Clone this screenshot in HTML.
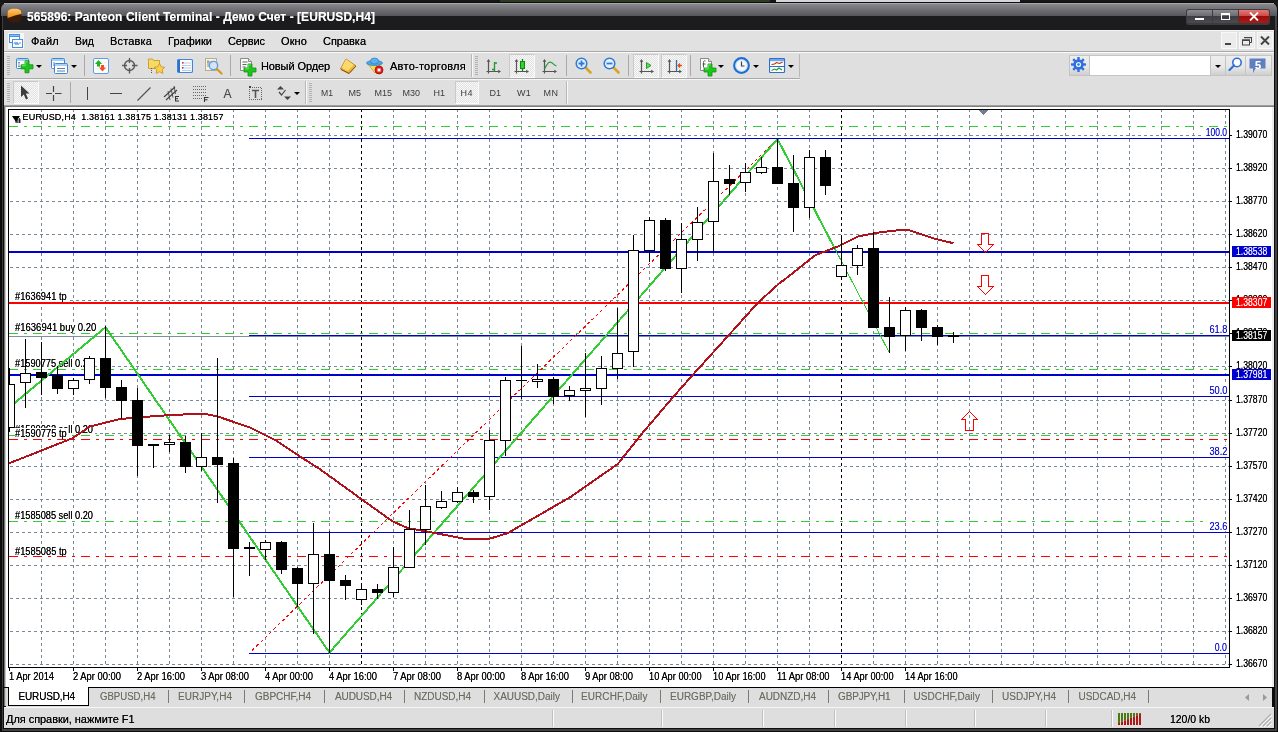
<!DOCTYPE html>
<html><head><meta charset="utf-8"><title>Terminal</title>
<style>
html,body{margin:0;padding:0;}
body{width:1278px;height:732px;overflow:hidden;background:#1b1b1d;font-family:"Liberation Sans",sans-serif;position:relative;}
.t{position:absolute;white-space:nowrap;line-height:12px;font-family:"Liberation Sans",sans-serif;text-shadow:0 0 0 rgba(0,0,0,.85);}
.abs{position:absolute;}
/*CSS*/
</style></head><body><div id="w" style="position:absolute;left:0;top:0;width:1278px;height:732px;will-change:transform">
<div class="abs" style="left:0px;top:0px;width:1278px;height:2px;background:#161616;"></div>
<div class="abs" style="left:500px;top:0px;width:270px;height:2px;background:#2f3a24;"></div>
<div class="abs" style="left:776px;top:0px;width:244px;height:2px;background:#d4d8d8;"></div>
<div class="abs" style="left:0px;top:2px;width:1278px;height:730px;background:#0c0c0c;border-radius:7px 7px 0 0;"></div>
<div class="abs" style="left:2px;top:16px;width:1px;height:714px;background:#3e3e40;"></div>
<div class="abs" style="left:1275px;top:16px;width:2px;height:714px;background:#434345;"></div>
<div class="abs" style="left:2px;top:729px;width:1275px;height:2px;background:#404042;"></div>
<div class="abs" style="left:3px;top:16px;width:1272px;height:15px;background:#1c1c1e;"></div>
<div class="abs" style="left:1px;top:3px;width:1276px;height:13px;background:linear-gradient(#8c8c90,#55555a);border-radius:6px 6px 0 0;"></div>
<div class="abs" style="left:4px;top:3px;width:1270px;height:1px;background:#a9a9ad;"></div>
<svg class="abs" style="left:6px;top:7px;" width="17" height="17" viewBox="0 0 17 17"><defs><linearGradient id="og" x1="0" y1="0" x2="0" y2="1"><stop offset="0" stop-color="#ffc870"/><stop offset="1" stop-color="#f08a10"/></linearGradient></defs><path d="M1.5 12V6c0-3 2-4.5 7-4.5s7 1.500 7 4.500v6c0 2-2.500 3.500-7 3.500s-7-1.500-7-3.500z" fill="#3a1c08"/><path d="M1.500 11V6c0-3 2-4.500 7-4.500s7 1.500 7 4.500v1c-5 1-10 2.500-14 4z" fill="url(#og)"/></svg>
<div class="t" style="top:11px;font-size:12px;line-height:12px;color:#fff;text-shadow:0 0 0 rgba(255,255,255,.5);left:27px;font-weight:700;letter-spacing:0.053px;">565896: Panteon Client Terminal - Демо Счет - [EURUSD,H4]</div>
<div class="abs" style="left:1186px;top:9px;width:84px;height:16px;background:#3c3c40;border-radius:3px;"></div>
<div class="abs" style="left:1187px;top:10px;width:25px;height:13px;background:linear-gradient(#8d8d91 0,#6c6c70 45%,#3e3e42 50%,#4c4c50 100%);border-radius:2px 0 0 2px;"></div>
<div class="abs" style="left:1213px;top:10px;width:25px;height:13px;background:linear-gradient(#8d8d91 0,#6c6c70 45%,#3e3e42 50%,#4c4c50 100%);"></div>
<div class="abs" style="left:1239px;top:10px;width:30px;height:13px;background:linear-gradient(#e27a78 0,#cf4a48 45%,#9c0c0a 50%,#a81c18 100%);border-radius:0 2px 2px 0;"></div>
<div class="abs" style="left:1195px;top:18px;width:9px;height:2px;background:#fff;"></div>
<div class="abs" style="left:1221px;top:13px;width:9px;height:7px;background:transparent;border:1px solid #fff;border-top-width:2px;box-sizing:border-box;"></div>
<svg class="abs" style="left:1249px;top:12px;" width="10" height="9" viewBox="0 0 10 9"><path d="M1 0.500L9 8.500M9 0.500L1 8.500" stroke="#fff" stroke-width="1.800"/></svg>
<div class="abs" style="left:4px;top:30px;width:1270px;height:1px;background:#f4f4f4;"></div>
<div class="abs" style="left:4px;top:31px;width:1270px;height:20px;background:#e1e1e1;"></div>
<div class="abs" style="left:4px;top:51px;width:1270px;height:1px;background:#a8a8a8;"></div>
<div class="abs" style="left:4px;top:52px;width:1270px;height:1px;background:#fbfbfb;"></div>
<div class="abs" style="left:4px;top:53px;width:1270px;height:53px;background:#dfdfdf;"></div>
<div class="abs" style="left:4px;top:106px;width:1270px;height:1px;background:#7f7f78;"></div>
<div class="abs" style="left:4px;top:107px;width:1270px;height:2px;background:#fff;"></div>
<div class="abs" style="left:4px;top:78px;width:796px;height:1px;background:#a8a8a8;"></div>
<div class="abs" style="left:4px;top:79px;width:796px;height:1px;background:#f6f6f6;"></div>
<div class="abs" style="left:4px;top:105px;width:1270px;height:1px;background:#a0a0a0;"></div>
<div class="abs" style="left:8px;top:33px;width:16px;height:16px;background:#f6f6f6;"></div>
<svg class="abs" style="left:8px;top:33px;" width="16" height="16" viewBox="0 0 16 16"><rect x="1.500" y="1.500" width="10" height="8" fill="#fff" stroke="#4a8ee0"/><rect x="1.500" y="1.500" width="10" height="2" fill="#8fc0f5" stroke="#4a8ee0"/><rect x="4.500" y="6.500" width="10" height="8" fill="#fff" stroke="#4a8ee0"/><path d="M6 11l1-2 1 3 1-3 1 3 1-2 2 0" stroke="#4a8ee0" fill="none" stroke-width=".8"/></svg>
<div class="t" style="top:36px;font-size:11px;line-height:11px;color:#000;left:31px;letter-spacing:0.238px;">Файл</div>
<div class="t" style="top:36px;font-size:11px;line-height:11px;color:#000;left:75px;transform:scale(0.9545,1);transform-origin:left top;">Вид</div>
<div class="t" style="top:36px;font-size:11px;line-height:11px;color:#000;left:110px;letter-spacing:0.158px;">Вставка</div>
<div class="t" style="top:36px;font-size:11px;line-height:11px;color:#000;left:168px;letter-spacing:0.038px;">Графики</div>
<div class="t" style="top:36px;font-size:11px;line-height:11px;color:#000;left:228px;letter-spacing:-0.112px;">Сервис</div>
<div class="t" style="top:36px;font-size:11px;line-height:11px;color:#000;left:281px;letter-spacing:0.109px;">Окно</div>
<div class="t" style="top:36px;font-size:11px;line-height:11px;color:#000;left:323px;letter-spacing:-0.022px;">Справка</div>
<div class="abs" style="left:1221px;top:32px;width:16px;height:17px;background:#ececec;border:1px solid #f8f8f8;box-sizing:border-box;"></div>
<div class="abs" style="left:1239px;top:32px;width:16px;height:17px;background:#ececec;border:1px solid #f8f8f8;box-sizing:border-box;"></div>
<div class="abs" style="left:1257px;top:32px;width:16px;height:17px;background:#ececec;border:1px solid #f8f8f8;box-sizing:border-box;"></div>
<div class="abs" style="left:1225px;top:43px;width:6px;height:2px;background:#444;"></div>
<svg class="abs" style="left:1240px;top:34px;" width="14" height="13" viewBox="0 0 14 13"><path d="M4.500 3.500h7v5h-2" fill="none" stroke="#444" stroke-width="1"/><rect x="2.500" y="6" width="7" height="5" fill="none" stroke="#444"/><rect x="2" y="5.500" width="8" height="1.500" fill="#444"/><rect x="4" y="3" width="8" height="1.200" fill="#444"/></svg>
<svg class="abs" style="left:1260px;top:36px;" width="10" height="9" viewBox="0 0 10 9"><path d="M1 0.500L9 8.500M9 0.500L1 8.500" stroke="#444" stroke-width="2"/></svg>
<div class="abs" style="left:7px;top:56px;width:3px;height:1px;background:#b2b2b2;"></div>
<div class="abs" style="left:7px;top:58px;width:3px;height:1px;background:#b2b2b2;"></div>
<div class="abs" style="left:7px;top:60px;width:3px;height:1px;background:#b2b2b2;"></div>
<div class="abs" style="left:7px;top:62px;width:3px;height:1px;background:#b2b2b2;"></div>
<div class="abs" style="left:7px;top:64px;width:3px;height:1px;background:#b2b2b2;"></div>
<div class="abs" style="left:7px;top:66px;width:3px;height:1px;background:#b2b2b2;"></div>
<div class="abs" style="left:7px;top:68px;width:3px;height:1px;background:#b2b2b2;"></div>
<div class="abs" style="left:7px;top:70px;width:3px;height:1px;background:#b2b2b2;"></div>
<div class="abs" style="left:7px;top:72px;width:3px;height:1px;background:#b2b2b2;"></div>
<div class="abs" style="left:7px;top:74px;width:3px;height:1px;background:#b2b2b2;"></div>
<svg class="abs" style="left:16px;top:57px;" width="18" height="18" viewBox="0 0 18 18"><rect x="0.500" y="1.500" width="12" height="10" rx="1" fill="#fff" stroke="#3f86d9"/><rect x="1" y="2" width="11" height="2" fill="#a9d0f7"/><path d="M3 5v5M2 6l1-1 1 1M2 9l1 1 1-1" stroke="#5a7fa8" fill="none" stroke-width=".8"/><path d="M5 7.8h4v-4h4v4h4v4h-4v4h-4v-4h-4z" fill="#1fc51f" stroke="#0c8f0c" stroke-width=".8"/><path d="M5.9 8.7h3.300v-4h2.500" fill="none" stroke="#7be87b" stroke-width=".9"/></svg>
<svg class="abs" style="left:36px;top:65px;" width="6" height="3" viewBox="0 0 6 3"><path d="M0 0h6l-3 3z" fill="#000"/></svg>
<svg class="abs" style="left:51px;top:57px;" width="18" height="18" viewBox="0 0 18 18"><rect x="0.500" y="1.500" width="13" height="10" rx="1" fill="#fff" stroke="#3f86d9"/><rect x="1" y="2" width="12" height="2" fill="#a9d0f7"/><path d="M3 5v4M5 7.500h7" stroke="#5a7fa8" fill="none"/><rect x="3.500" y="6.500" width="13" height="10" rx="1" fill="#fff" stroke="#3f86d9"/><rect x="4" y="7" width="12" height="2" fill="#a9d0f7"/><path d="M6 11.500h8M6 14h8" stroke="#5a7fa8"/></svg>
<svg class="abs" style="left:71px;top:65px;" width="6" height="3" viewBox="0 0 6 3"><path d="M0 0h6l-3 3z" fill="#000"/></svg>
<div class="abs" style="left:84px;top:55px;width:1px;height:21px;background:#a9a9a9;"></div>
<svg class="abs" style="left:93px;top:58px;" width="16" height="16" viewBox="0 0 16 16"><rect x="0.500" y="0.500" width="15" height="15" rx="1.500" fill="#fff" stroke="#5b9ee6"/><path d="M2 5h12M2 8h12M2 11h12" stroke="#ddd" stroke-width=".6"/><path d="M5.500 2L2 6h2v2.500h3V6h2z" fill="#1eb41e"/><path d="M9.500 13.500L6 9.500h2V7h3v2.500h2z" fill="#f0502a"/></svg>
<svg class="abs" style="left:122px;top:58px;" width="16" height="16" viewBox="0 0 16 16"><circle cx="7.500" cy="7.500" r="5" fill="none" stroke="#595959" stroke-width="1.400"/><path d="M7.500 0v5M7.500 10v5.500M0 7.500h5M10 7.500h5.500" stroke="#595959" stroke-width="1.400"/></svg>
<svg class="abs" style="left:148px;top:57px;" width="18" height="18" viewBox="0 0 18 18"><path d="M0.500 4.500v-2.500h4l1 1.500h6v8h-11z" fill="#f7d969" stroke="#c9a227"/><path d="M3.500 11v5" stroke="#555" stroke-dasharray="1 1"/><path d="M11.500 6.500l1.700 3.300 3.600.5-2.600 2.500.7 3.700-3.400-1.800-3.300 1.800.6-3.700-2.600-2.500 3.600-.5z" fill="#f9d24a" stroke="#c8921e" stroke-width=".8"/></svg>
<svg class="abs" style="left:177px;top:58px;" width="16" height="16" viewBox="0 0 16 16"><rect x="0.500" y="1.500" width="15" height="13" rx="1.500" fill="#fff" stroke="#3f86d9" stroke-width="1.200"/><rect x="1" y="2" width="2" height="12" fill="#2e6fc9"/><path d="M5 5h9M5 7.500h9M5 10h9M5 12.500h9" stroke="#9cc2ee" stroke-width=".8"/><rect x="5" y="4" width="1.500" height="1.500" fill="#d22"/><rect x="5" y="9" width="1.500" height="1.500" fill="#d22"/></svg>
<svg class="abs" style="left:205px;top:57px;" width="18" height="18" viewBox="0 0 18 18"><rect x="0.500" y="1.500" width="11" height="12" fill="#f4f1e6" stroke="#b9ae8c"/><path d="M3 3v7M6 4v5M2 5h3M5 6h3" stroke="#777" stroke-width=".8"/><circle cx="8.500" cy="8.500" r="4.200" fill="#cfe4fb" fill-opacity=".85" stroke="#5b9ee6" stroke-width="1.300"/><path d="M12 12l4.500 4.500" stroke="#d69a1e" stroke-width="2.200" stroke-linecap="round"/></svg>
<div class="abs" style="left:230px;top:55px;width:1px;height:21px;background:#a9a9a9;"></div>
<svg class="abs" style="left:240px;top:57px;" width="17" height="20" viewBox="0 0 17 20"><path d="M0.500 1.500h8l3 3v9h-11z" fill="#fbfbfb" stroke="#8a8a8a"/><path d="M8.500 1.500v3h3" fill="#ddd" stroke="#8a8a8a"/><path d="M2.500 5h5M2.500 7.500h4M2.500 10h3" stroke="#666"/><path d="M4 11h4v-4h4v4h4v4h-4v4h-4v-4h-4z" fill="#1fc51f" stroke="#0c8f0c" stroke-width=".8"/><path d="M4.9 11.9h3.300v-4h2.500" fill="none" stroke="#7be87b" stroke-width=".9"/></svg>
<div class="t" style="top:61px;font-size:11px;line-height:11px;color:#000;left:261px;letter-spacing:-0.099px;">Новый Ордер</div>
<svg class="abs" style="left:340px;top:58px;" width="17" height="16" viewBox="0 0 17 16"><path d="M6 1l10 7-7 7.500-8.500-4.500z" fill="#eab53a" stroke="#b67812"/><path d="M6 1l8 6-6.500 6-6-3.500z" fill="#fbd96a"/><path d="M1 11.500l8 4 7-7.500" fill="none" stroke="#8a5a10" stroke-width="1"/></svg>
<svg class="abs" style="left:366px;top:57px;" width="18" height="18" viewBox="0 0 18 18"><path d="M2 7l7 9 6-9z" fill="#f7dc5a" stroke="#caa21e" stroke-width=".8"/><ellipse cx="8.500" cy="6" rx="8" ry="2.600" fill="#4da3e6" stroke="#2b7dc4" stroke-width=".7"/><ellipse cx="8.500" cy="4" rx="4" ry="3" fill="#5fb1ee" stroke="#2b7dc4" stroke-width=".7"/><circle cx="13" cy="13" r="4" fill="#d8201c" stroke="#a00" stroke-width=".7"/><rect x="11.500" y="11.500" width="3" height="3" fill="#fff"/></svg>
<div class="t" style="top:61px;font-size:11px;line-height:11px;color:#000;left:390px;letter-spacing:0.258px;">Авто-торговля</div>
<div class="abs" style="left:471px;top:54px;width:1px;height:23px;background:#b8b8b8;"></div>
<div class="abs" style="left:472px;top:54px;width:1px;height:23px;background:#f8f8f8;"></div>
<div class="abs" style="left:475px;top:56px;width:3px;height:1px;background:#b2b2b2;"></div>
<div class="abs" style="left:475px;top:58px;width:3px;height:1px;background:#b2b2b2;"></div>
<div class="abs" style="left:475px;top:60px;width:3px;height:1px;background:#b2b2b2;"></div>
<div class="abs" style="left:475px;top:62px;width:3px;height:1px;background:#b2b2b2;"></div>
<div class="abs" style="left:475px;top:64px;width:3px;height:1px;background:#b2b2b2;"></div>
<div class="abs" style="left:475px;top:66px;width:3px;height:1px;background:#b2b2b2;"></div>
<div class="abs" style="left:475px;top:68px;width:3px;height:1px;background:#b2b2b2;"></div>
<div class="abs" style="left:475px;top:70px;width:3px;height:1px;background:#b2b2b2;"></div>
<div class="abs" style="left:475px;top:72px;width:3px;height:1px;background:#b2b2b2;"></div>
<div class="abs" style="left:475px;top:74px;width:3px;height:1px;background:#b2b2b2;"></div>
<svg class="abs" style="left:486px;top:59px;" width="16" height="16" viewBox="0 0 16 16"><path d="M2.500 1v13.500M0.500 12.500h13" stroke="#555" stroke-width="1.200" fill="none"/><path d="M2.500 0l-1.800 2.800h3.600zM15 12.500l-2.800-1.800v3.600z" fill="#555"/><path d="M8.500 3v9M8.500 4h2.500M6 10.500h2.500" stroke="#1f9a2f" stroke-width="1.300" fill="none"/></svg>
<div class="abs" style="left:509px;top:54px;width:26px;height:24px;background:#ececec;border:1px solid #c9c9c9;border-right-color:#fafafa;border-bottom-color:#fafafa;box-sizing:border-box;background-image:repeating-conic-gradient(#e2e2e2 0 25%,#f8f8f8 0 50%);background-size:2px 2px;"></div>
<svg class="abs" style="left:514px;top:59px;" width="16" height="16" viewBox="0 0 16 16"><path d="M2.500 1v13.500M0.500 12.500h13" stroke="#555" stroke-width="1.200" fill="none"/><path d="M2.500 0l-1.800 2.800h3.600zM15 12.500l-2.800-1.800v3.600z" fill="#555"/><path d="M8.500 0v12" stroke="#0a7a0a" stroke-width="1.200"/><rect x="6.500" y="2.500" width="4" height="7" fill="#2fd32f" stroke="#0a8a0a"/></svg>
<svg class="abs" style="left:542px;top:59px;" width="16" height="16" viewBox="0 0 16 16"><path d="M2.500 1v13.500M0.500 12.500h13" stroke="#555" stroke-width="1.200" fill="none"/><path d="M2.500 0l-1.800 2.800h3.600zM15 12.500l-2.800-1.800v3.600z" fill="#555"/><path d="M2.500 10c3-6 5-8 7-6.500s3 3 5 3.500" stroke="#2f9a3f" stroke-width="1.200" fill="none"/></svg>
<div class="abs" style="left:566px;top:55px;width:1px;height:21px;background:#a9a9a9;"></div>
<svg class="abs" style="left:575px;top:57px;" width="17" height="17" viewBox="0 0 17 17"><path d="M10.500 10.500l5 5" stroke="#d9a41e" stroke-width="2.600" stroke-linecap="round"/><circle cx="6.500" cy="6.500" r="5.300" fill="#e6f1fd" stroke="#2f7bd4" stroke-width="1.500"/><path d="M3.500 6.500h6M6.500 3.500v6" stroke="#2f7bd4" stroke-width="1.800"/></svg>
<svg class="abs" style="left:603px;top:57px;" width="17" height="17" viewBox="0 0 17 17"><path d="M10.500 10.500l5 5" stroke="#d9a41e" stroke-width="2.600" stroke-linecap="round"/><circle cx="6.500" cy="6.500" r="5.300" fill="#e6f1fd" stroke="#2f7bd4" stroke-width="1.500"/><path d="M3.500 6.500h6" stroke="#2f7bd4" stroke-width="1.800"/></svg>
<div class="abs" style="left:628px;top:55px;width:1px;height:21px;background:#a9a9a9;"></div>
<div class="abs" style="left:633px;top:54px;width:26px;height:24px;background:#ececec;border:1px solid #c9c9c9;border-right-color:#fafafa;border-bottom-color:#fafafa;box-sizing:border-box;background-image:repeating-conic-gradient(#e2e2e2 0 25%,#f8f8f8 0 50%);background-size:2px 2px;"></div>
<svg class="abs" style="left:639px;top:59px;" width="16" height="16" viewBox="0 0 16 16"><path d="M2.500 1v13.500M0.500 12.500h13" stroke="#555" stroke-width="1.200" fill="none"/><path d="M2.500 0l-1.800 2.800h3.600zM15 12.500l-2.800-1.800v3.600z" fill="#555"/><path d="M7.500 3.500l4.500 3-4.500 3z" fill="#5fd85f" stroke="#1a9a1a" stroke-width=".9"/></svg>
<div class="abs" style="left:661px;top:54px;width:26px;height:24px;background:#ececec;border:1px solid #c9c9c9;border-right-color:#fafafa;border-bottom-color:#fafafa;box-sizing:border-box;background-image:repeating-conic-gradient(#e2e2e2 0 25%,#f8f8f8 0 50%);background-size:2px 2px;"></div>
<svg class="abs" style="left:667px;top:59px;" width="16" height="16" viewBox="0 0 16 16"><path d="M2.500 1v13.500M0.500 12.500h13" stroke="#555" stroke-width="1.200" fill="none"/><path d="M2.500 0l-1.800 2.800h3.600zM15 12.500l-2.800-1.800v3.600z" fill="#555"/><path d="M9.500 1v11" stroke="#2a6fb4" stroke-width="1.300"/><path d="M15 6.500h-4M13 4.500l-2 2 2 2" stroke="#e0501a" stroke-width="1.300" fill="none"/></svg>
<div class="abs" style="left:690px;top:55px;width:1px;height:21px;background:#a9a9a9;"></div>
<svg class="abs" style="left:700px;top:57px;" width="17" height="20" viewBox="0 0 17 20"><path d="M0.500 1.500h8l3 3v9h-11z" fill="#fbfbfb" stroke="#8a8a8a"/><path d="M8.500 1.500v3h3" fill="#ddd" stroke="#8a8a8a"/><path d="M5.500 4c-1.500-.5-2 0-2 1.500v5M2.500 7h3" stroke="#555" fill="none"/><path d="M4 11h4v-4h4v4h4v4h-4v4h-4v-4h-4z" fill="#1fc51f" stroke="#0c8f0c" stroke-width=".8"/><path d="M4.9 11.9h3.300v-4h2.500" fill="none" stroke="#7be87b" stroke-width=".9"/></svg>
<svg class="abs" style="left:718px;top:65px;" width="6" height="3" viewBox="0 0 6 3"><path d="M0 0h6l-3 3z" fill="#000"/></svg>
<svg class="abs" style="left:733px;top:57px;" width="18" height="18" viewBox="0 0 18 18"><circle cx="8.500" cy="8.500" r="7.300" fill="#fff" stroke="#1f6fd0" stroke-width="2.200"/><circle cx="8.500" cy="8.500" r="5.800" fill="#f4f8fc" stroke="#8fbbe8" stroke-width=".6"/><path d="M8.500 4.500v4.500h3" stroke="#444" stroke-width="1.200" fill="none"/></svg>
<svg class="abs" style="left:753px;top:65px;" width="6" height="3" viewBox="0 0 6 3"><path d="M0 0h6l-3 3z" fill="#000"/></svg>
<svg class="abs" style="left:769px;top:58px;" width="17" height="16" viewBox="0 0 17 16"><rect x="0.500" y="0.500" width="15" height="14" rx="1" fill="#fff" stroke="#2e6fc9" stroke-width="1.200"/><rect x="1" y="1" width="14" height="2.200" fill="#6fa9e8"/><path d="M1 8.500h14" stroke="#2e6fc9"/><path d="M2.500 6.500l3-.5 2-1.500 3 1 3-1.500" stroke="#b02a10" fill="none" stroke-width="1.100"/><path d="M2.500 12.500l3-1.500 2 1 2.500-2 3 2" stroke="#1f9a2f" fill="none" stroke-width="1.100"/></svg>
<svg class="abs" style="left:788px;top:65px;" width="6" height="3" viewBox="0 0 6 3"><path d="M0 0h6l-3 3z" fill="#000"/></svg>
<div class="abs" style="left:799px;top:54px;width:1px;height:23px;background:#b8b8b8;"></div>
<div class="abs" style="left:7px;top:83px;width:3px;height:1px;background:#b2b2b2;"></div>
<div class="abs" style="left:7px;top:85px;width:3px;height:1px;background:#b2b2b2;"></div>
<div class="abs" style="left:7px;top:87px;width:3px;height:1px;background:#b2b2b2;"></div>
<div class="abs" style="left:7px;top:89px;width:3px;height:1px;background:#b2b2b2;"></div>
<div class="abs" style="left:7px;top:91px;width:3px;height:1px;background:#b2b2b2;"></div>
<div class="abs" style="left:7px;top:93px;width:3px;height:1px;background:#b2b2b2;"></div>
<div class="abs" style="left:7px;top:95px;width:3px;height:1px;background:#b2b2b2;"></div>
<div class="abs" style="left:7px;top:97px;width:3px;height:1px;background:#b2b2b2;"></div>
<div class="abs" style="left:7px;top:99px;width:3px;height:1px;background:#b2b2b2;"></div>
<div class="abs" style="left:7px;top:101px;width:3px;height:1px;background:#b2b2b2;"></div>
<div class="abs" style="left:13px;top:81px;width:26px;height:23px;background:#ececec;border:1px solid #c9c9c9;border-right-color:#fafafa;border-bottom-color:#fafafa;box-sizing:border-box;background-image:repeating-conic-gradient(#e2e2e2 0 25%,#f8f8f8 0 50%);background-size:2px 2px;"></div>
<svg class="abs" style="left:20px;top:85px;" width="10" height="15" viewBox="0 0 10 15"><path d="M1 0.500v11.500l2.800-2.600 2.200 5 2-1-2.200-4.800h3.700z" fill="#3c3c3c"/></svg>
<svg class="abs" style="left:46px;top:86px;" width="16" height="15" viewBox="0 0 16 15"><path d="M7.500 0v6M7.500 9v6M0 7.500h6M9 7.500h6.500" stroke="#444" stroke-width="1.200"/></svg>
<div class="abs" style="left:70px;top:82px;width:1px;height:21px;background:#a9a9a9;"></div>
<div class="abs" style="left:87px;top:87px;width:1px;height:13px;background:#444;"></div>
<div class="abs" style="left:110px;top:93px;width:12px;height:1px;background:#444;"></div>
<svg class="abs" style="left:137px;top:87px;" width="14" height="14" viewBox="0 0 14 14"><path d="M0.500 13.500L13.500 0.500" stroke="#555" stroke-width="1.200"/></svg>
<svg class="abs" style="left:163px;top:85px;" width="18" height="17" viewBox="0 0 18 17"><path d="M1 12L12 2M3 15L14 5" stroke="#444" stroke-width="1.100"/><path d="M5 6l2 9M8 3.500l2 9M11 1l1.500 8" stroke="#444" stroke-width=".9"/><path d="M12 11.500h4M12 13.700h3M12 16h4M12.500 11.500v4.500" stroke="#333" stroke-width="1"/></svg>
<svg class="abs" style="left:193px;top:85px;" width="16" height="17" viewBox="0 0 16 17"><path d="M0 1.500h13M0 4.500h13M0 7.500h13M0 10.500h13M0 13.500h9" stroke="#666" stroke-dasharray="1 1" shape-rendering="crispEdges"/><path d="M11.500 12v5M11.500 12.500h4M11.500 14.700h3" stroke="#333" stroke-width="1.100" fill="none"/></svg>
<div class="t" style="top:88px;font-size:12px;line-height:12px;color:#4a4a4a;text-shadow:0 0 0 rgba(74,74,74,.5);left:223.5px;letter-spacing:-0.016px;">A</div>
<svg class="abs" style="left:249px;top:86px;" width="14" height="14" viewBox="0 0 14 14"><rect x="0.500" y="1.500" width="12" height="12" fill="none" stroke="#666" stroke-dasharray="1 1" shape-rendering="crispEdges"/><path d="M3 4.500h7M6.500 4v8" stroke="#555" stroke-width="1.600"/><rect x="0" y="0" width="2" height="2" fill="#444"/></svg>
<svg class="abs" style="left:276px;top:86px;" width="16" height="14" viewBox="0 0 16 14"><path d="M1 3.500l3.500-3.500 3.500 3.500z" fill="#444"/><path d="M8 10.500l3.500 3.500 3.500-3.500z" fill="#444"/><path d="M3 6l2.500 3 4-5" stroke="#444" fill="none" stroke-width="1.200"/></svg>
<svg class="abs" style="left:294px;top:92px;" width="6" height="3" viewBox="0 0 6 3"><path d="M0 0h6l-3 3z" fill="#000"/></svg>
<div class="abs" style="left:305px;top:81px;width:1px;height:23px;background:#b8b8b8;"></div>
<div class="abs" style="left:306px;top:81px;width:1px;height:23px;background:#f8f8f8;"></div>
<div class="abs" style="left:309px;top:83px;width:3px;height:1px;background:#b2b2b2;"></div>
<div class="abs" style="left:309px;top:85px;width:3px;height:1px;background:#b2b2b2;"></div>
<div class="abs" style="left:309px;top:87px;width:3px;height:1px;background:#b2b2b2;"></div>
<div class="abs" style="left:309px;top:89px;width:3px;height:1px;background:#b2b2b2;"></div>
<div class="abs" style="left:309px;top:91px;width:3px;height:1px;background:#b2b2b2;"></div>
<div class="abs" style="left:309px;top:93px;width:3px;height:1px;background:#b2b2b2;"></div>
<div class="abs" style="left:309px;top:95px;width:3px;height:1px;background:#b2b2b2;"></div>
<div class="abs" style="left:309px;top:97px;width:3px;height:1px;background:#b2b2b2;"></div>
<div class="abs" style="left:309px;top:99px;width:3px;height:1px;background:#b2b2b2;"></div>
<div class="abs" style="left:309px;top:101px;width:3px;height:1px;background:#b2b2b2;"></div>
<div class="abs" style="left:455px;top:81px;width:24px;height:23px;background:#ececec;border:1px solid #c9c9c9;border-right-color:#fafafa;border-bottom-color:#fafafa;box-sizing:border-box;background-image:repeating-conic-gradient(#e2e2e2 0 25%,#f8f8f8 0 50%);background-size:2px 2px;"></div>
<div class="t" style="top:89px;font-size:9px;line-height:9px;color:#3c3c3c;text-shadow:0 0 0 rgba(60,60,60,.5);left:321px;transform:scale(0.9588,1);transform-origin:left top;text-shadow:none;">M1</div>
<div class="t" style="top:89px;font-size:9px;line-height:9px;color:#3c3c3c;text-shadow:0 0 0 rgba(60,60,60,.5);left:348.5px;text-shadow:none;">M5</div>
<div class="t" style="top:89px;font-size:9px;line-height:9px;color:#3c3c3c;text-shadow:0 0 0 rgba(60,60,60,.5);left:374.5px;text-shadow:none;">M15</div>
<div class="t" style="top:89px;font-size:9px;line-height:9px;color:#3c3c3c;text-shadow:0 0 0 rgba(60,60,60,.5);left:402.5px;text-shadow:none;">M30</div>
<div class="t" style="top:89px;font-size:9px;line-height:9px;color:#3c3c3c;text-shadow:0 0 0 rgba(60,60,60,.5);left:433.5px;text-shadow:none;">H1</div>
<div class="t" style="top:89px;font-size:9px;line-height:9px;color:#3c3c3c;text-shadow:0 0 0 rgba(60,60,60,.5);left:460.5px;letter-spacing:0.492px;text-shadow:none;">H4</div>
<div class="t" style="top:89px;font-size:9px;line-height:9px;color:#3c3c3c;text-shadow:0 0 0 rgba(60,60,60,.5);left:489.5px;text-shadow:none;">D1</div>
<div class="t" style="top:89px;font-size:9px;line-height:9px;color:#3c3c3c;text-shadow:0 0 0 rgba(60,60,60,.5);left:517px;letter-spacing:0.250px;text-shadow:none;">W1</div>
<div class="t" style="top:89px;font-size:9px;line-height:9px;color:#3c3c3c;text-shadow:0 0 0 rgba(60,60,60,.5);left:543.5px;letter-spacing:0.500px;text-shadow:none;">MN</div>
<div class="abs" style="left:566px;top:81px;width:1px;height:23px;background:#b8b8b8;"></div>
<div class="abs" style="left:567px;top:81px;width:1px;height:23px;background:#f8f8f8;"></div>
<div class="abs" style="left:1069px;top:55px;width:203px;height:21px;background:#e9e9e9;border:1px solid #c4c4c4;box-sizing:border-box;background:linear-gradient(#eee 0,#e6e6e6 60%,#cfcfcf 100%);"></div>
<div class="abs" style="left:1090px;top:56px;width:120px;height:19px;background:#fff;"></div>
<div class="abs" style="left:1089px;top:56px;width:1px;height:19px;background:#c4c4c4;"></div>
<div class="abs" style="left:1210px;top:56px;width:1px;height:19px;background:#c4c4c4;"></div>
<div class="abs" style="left:1225px;top:56px;width:1px;height:19px;background:#c4c4c4;"></div>
<div class="abs" style="left:1245px;top:56px;width:1px;height:19px;background:#c4c4c4;"></div>
<svg class="abs" style="left:1071px;top:57px;" width="15" height="15" viewBox="0 0 15 15"><rect x="6.300" y="0" width="2.400" height="3" transform="rotate(0 7.500 7.500)" fill="#2f6fe0"/><rect x="6.300" y="0" width="2.400" height="3" transform="rotate(45 7.500 7.500)" fill="#2f6fe0"/><rect x="6.300" y="0" width="2.400" height="3" transform="rotate(90 7.500 7.500)" fill="#2f6fe0"/><rect x="6.300" y="0" width="2.400" height="3" transform="rotate(135 7.500 7.500)" fill="#2f6fe0"/><rect x="6.300" y="0" width="2.400" height="3" transform="rotate(180 7.500 7.500)" fill="#2f6fe0"/><rect x="6.300" y="0" width="2.400" height="3" transform="rotate(225 7.500 7.500)" fill="#2f6fe0"/><rect x="6.300" y="0" width="2.400" height="3" transform="rotate(270 7.500 7.500)" fill="#2f6fe0"/><rect x="6.300" y="0" width="2.400" height="3" transform="rotate(315 7.500 7.500)" fill="#2f6fe0"/><circle cx="7.500" cy="7.500" r="5.200" fill="#2f6fe0"/><circle cx="7.500" cy="7.500" r="2.600" fill="#e8eefc"/><circle cx="7.500" cy="7.500" r="1.200" fill="#2f6fe0"/></svg>
<svg class="abs" style="left:1215px;top:65px;" width="6" height="3" viewBox="0 0 6 3"><path d="M0 0h6l-3 3z" fill="#000"/></svg>
<svg class="abs" style="left:1228px;top:57px;" width="15" height="15" viewBox="0 0 15 15"><circle cx="9" cy="5.500" r="4.200" fill="#fff" stroke="#2f6fd8" stroke-width="1.600"/><path d="M6 8.500l-4.500 4.500" stroke="#2f6fd8" stroke-width="2.200" stroke-linecap="round"/></svg>
<svg class="abs" style="left:1249px;top:58px;" width="18" height="16" viewBox="0 0 18 16"><path d="M0.500 0.500h16v10h-10l-2.500 4.500v-4.500h-3.500z" fill="#5f7fc0"/></svg>
<div class="t" style="top:60px;font-size:11px;line-height:11px;color:#fff;text-shadow:0 0 0 rgba(255,255,255,.5);left:1255px;font-weight:700;letter-spacing:-0.125px;">5</div>
<div class="abs" style="left:4px;top:107px;width:1270px;height:580px;background:#fff"></div><div class="abs" style="left:4px;top:107px;width:1px;height:599px;background:#77776f"></div><div class="abs" style="left:5px;top:107px;width:1px;height:599px;background:#c6c6c0"></div><div class="abs" style="left:1272px;top:107px;width:2px;height:580px;background:#ececec"></div>
<svg width="1278" height="732" style="position:absolute;left:0;top:0" shape-rendering="crispEdges"><rect x="8" y="109" width="1222" height="559" fill="#fff"/><line x1="10" y1="135.5" x2="1229" y2="135.5" stroke="#778899" stroke-dasharray="3 3"/><line x1="10" y1="168.5" x2="1229" y2="168.5" stroke="#778899" stroke-dasharray="3 3"/><line x1="10" y1="201.5" x2="1229" y2="201.5" stroke="#778899" stroke-dasharray="3 3"/><line x1="10" y1="234.5" x2="1229" y2="234.5" stroke="#778899" stroke-dasharray="3 3"/><line x1="10" y1="267.5" x2="1229" y2="267.5" stroke="#778899" stroke-dasharray="3 3"/><line x1="10" y1="300.5" x2="1229" y2="300.5" stroke="#778899" stroke-dasharray="3 3"/><line x1="10" y1="333.5" x2="1229" y2="333.5" stroke="#778899" stroke-dasharray="3 3"/><line x1="10" y1="366.5" x2="1229" y2="366.5" stroke="#778899" stroke-dasharray="3 3"/><line x1="10" y1="400.5" x2="1229" y2="400.5" stroke="#778899" stroke-dasharray="3 3"/><line x1="10" y1="433.5" x2="1229" y2="433.5" stroke="#778899" stroke-dasharray="3 3"/><line x1="10" y1="466.5" x2="1229" y2="466.5" stroke="#778899" stroke-dasharray="3 3"/><line x1="10" y1="499.5" x2="1229" y2="499.5" stroke="#778899" stroke-dasharray="3 3"/><line x1="10" y1="532.5" x2="1229" y2="532.5" stroke="#778899" stroke-dasharray="3 3"/><line x1="10" y1="565.5" x2="1229" y2="565.5" stroke="#778899" stroke-dasharray="3 3"/><line x1="10" y1="598.5" x2="1229" y2="598.5" stroke="#778899" stroke-dasharray="3 3"/><line x1="10" y1="631.5" x2="1229" y2="631.5" stroke="#778899" stroke-dasharray="3 3"/><line x1="10" y1="664.5" x2="1229" y2="664.5" stroke="#778899" stroke-dasharray="3 3"/><line x1="41.5" y1="110" x2="41.5" y2="667" stroke="#778899" stroke-dasharray="3 3" stroke-dashoffset="1"/><line x1="73.5" y1="110" x2="73.5" y2="667" stroke="#778899" stroke-dasharray="3 3" stroke-dashoffset="1"/><line x1="105.5" y1="110" x2="105.5" y2="667" stroke="#778899" stroke-dasharray="3 3" stroke-dashoffset="1"/><line x1="137.5" y1="110" x2="137.5" y2="667" stroke="#778899" stroke-dasharray="3 3" stroke-dashoffset="1"/><line x1="169.5" y1="110" x2="169.5" y2="667" stroke="#778899" stroke-dasharray="3 3" stroke-dashoffset="1"/><line x1="201.5" y1="110" x2="201.5" y2="667" stroke="#778899" stroke-dasharray="3 3" stroke-dashoffset="1"/><line x1="233.5" y1="110" x2="233.5" y2="667" stroke="#778899" stroke-dasharray="3 3" stroke-dashoffset="1"/><line x1="265.5" y1="110" x2="265.5" y2="667" stroke="#778899" stroke-dasharray="3 3" stroke-dashoffset="1"/><line x1="297.5" y1="110" x2="297.5" y2="667" stroke="#778899" stroke-dasharray="3 3" stroke-dashoffset="1"/><line x1="329.5" y1="110" x2="329.5" y2="667" stroke="#778899" stroke-dasharray="3 3" stroke-dashoffset="1"/><line x1="361.5" y1="110" x2="361.5" y2="667" stroke="#000" stroke-dasharray="3 3" stroke-dashoffset="1"/><line x1="393.5" y1="110" x2="393.5" y2="667" stroke="#778899" stroke-dasharray="3 3" stroke-dashoffset="1"/><line x1="425.5" y1="110" x2="425.5" y2="667" stroke="#778899" stroke-dasharray="3 3" stroke-dashoffset="1"/><line x1="457.5" y1="110" x2="457.5" y2="667" stroke="#778899" stroke-dasharray="3 3" stroke-dashoffset="1"/><line x1="489.5" y1="110" x2="489.5" y2="667" stroke="#778899" stroke-dasharray="3 3" stroke-dashoffset="1"/><line x1="521.5" y1="110" x2="521.5" y2="667" stroke="#778899" stroke-dasharray="3 3" stroke-dashoffset="1"/><line x1="553.5" y1="110" x2="553.5" y2="667" stroke="#778899" stroke-dasharray="3 3" stroke-dashoffset="1"/><line x1="585.5" y1="110" x2="585.5" y2="667" stroke="#778899" stroke-dasharray="3 3" stroke-dashoffset="1"/><line x1="617.5" y1="110" x2="617.5" y2="667" stroke="#778899" stroke-dasharray="3 3" stroke-dashoffset="1"/><line x1="649.5" y1="110" x2="649.5" y2="667" stroke="#778899" stroke-dasharray="3 3" stroke-dashoffset="1"/><line x1="681.5" y1="110" x2="681.5" y2="667" stroke="#778899" stroke-dasharray="3 3" stroke-dashoffset="1"/><line x1="713.5" y1="110" x2="713.5" y2="667" stroke="#778899" stroke-dasharray="3 3" stroke-dashoffset="1"/><line x1="745.5" y1="110" x2="745.5" y2="667" stroke="#778899" stroke-dasharray="3 3" stroke-dashoffset="1"/><line x1="777.5" y1="110" x2="777.5" y2="667" stroke="#778899" stroke-dasharray="3 3" stroke-dashoffset="1"/><line x1="809.5" y1="110" x2="809.5" y2="667" stroke="#778899" stroke-dasharray="3 3" stroke-dashoffset="1"/><line x1="841.5" y1="110" x2="841.5" y2="667" stroke="#000" stroke-dasharray="3 3" stroke-dashoffset="1"/><line x1="873.5" y1="110" x2="873.5" y2="667" stroke="#778899" stroke-dasharray="3 3" stroke-dashoffset="1"/><line x1="905.5" y1="110" x2="905.5" y2="667" stroke="#778899" stroke-dasharray="3 3" stroke-dashoffset="1"/><line x1="937.5" y1="110" x2="937.5" y2="667" stroke="#778899" stroke-dasharray="3 3" stroke-dashoffset="1"/><line x1="969.5" y1="110" x2="969.5" y2="667" stroke="#778899" stroke-dasharray="3 3" stroke-dashoffset="1"/><line x1="1001.5" y1="110" x2="1001.5" y2="667" stroke="#778899" stroke-dasharray="3 3" stroke-dashoffset="1"/><line x1="1033.5" y1="110" x2="1033.5" y2="667" stroke="#778899" stroke-dasharray="3 3" stroke-dashoffset="1"/><line x1="1065.5" y1="110" x2="1065.5" y2="667" stroke="#778899" stroke-dasharray="3 3" stroke-dashoffset="1"/><line x1="1097.5" y1="110" x2="1097.5" y2="667" stroke="#778899" stroke-dasharray="3 3" stroke-dashoffset="1"/><line x1="1129.5" y1="110" x2="1129.5" y2="667" stroke="#778899" stroke-dasharray="3 3" stroke-dashoffset="1"/><line x1="1161.5" y1="110" x2="1161.5" y2="667" stroke="#778899" stroke-dasharray="3 3" stroke-dashoffset="1"/><line x1="1193.5" y1="110" x2="1193.5" y2="667" stroke="#778899" stroke-dasharray="3 3" stroke-dashoffset="1"/><line x1="1225.5" y1="110" x2="1225.5" y2="667" stroke="#778899" stroke-dasharray="3 3" stroke-dashoffset="1"/></svg>
<div class="abs" style="left:9px;top:291px;width:60px;height:11px;background:#fff;"></div>
<div class="t" style="top:292px;font-size:10px;line-height:10px;color:#000;left:15.3px;transform:scale(0.9294,1);transform-origin:left 8px;">#1636941 tp</div>
<div class="abs" style="left:9px;top:322px;width:89.3px;height:11px;background:#fff;"></div>
<div class="t" style="top:323px;font-size:10px;line-height:10px;color:#000;left:15.3px;transform:scale(0.9493,1);transform-origin:left 8px;">#1636941 buy 0.20</div>
<div class="abs" style="left:9px;top:358px;width:86px;height:11px;background:#fff;"></div>
<div class="t" style="top:359px;font-size:10px;line-height:10px;color:#000;left:15.3px;transform:scale(0.9227,1);transform-origin:left 8px;">#1590775 sell 0.20</div>
<div class="abs" style="left:9px;top:424px;width:86px;height:11px;background:#fff;"></div>
<div class="t" style="top:425px;font-size:10px;line-height:10px;color:#000;left:15.3px;transform:scale(0.9227,1);transform-origin:left 8px;">#1590062 sell 0.20</div>
<div class="abs" style="left:9px;top:510px;width:86px;height:11px;background:#fff;"></div>
<div class="t" style="top:511px;font-size:10px;line-height:10px;color:#000;left:15.3px;transform:scale(0.9227,1);transform-origin:left 8px;">#1585085 sell 0.20</div>
<div class="abs" style="left:9px;top:546px;width:60px;height:11px;background:#fff;"></div>
<div class="t" style="top:547px;font-size:10px;line-height:10px;color:#000;left:15.3px;transform:scale(0.9294,1);transform-origin:left 8px;">#1585085 tp</div>
<div class="t" style="top:113px;font-size:9px;line-height:9px;color:#000;left:22.6px;letter-spacing:0.151px;white-space:pre;">EURUSD,H4  1.38161 1.38175 1.38131 1.38157</div>
<svg width="1278" height="732" style="position:absolute;left:0;top:0" shape-rendering="crispEdges"><defs><clipPath id="cc"><rect x="9" y="110" width="1220" height="557"/></clipPath></defs><rect x="9" y="126" width="1220" height="1" fill="#fff"/><line x1="9" y1="126.5" x2="1229" y2="126.5" stroke="#32cd32" stroke-dasharray="9 6 3 6"/><rect x="9" y="333" width="1220" height="1" fill="#fff"/><line x1="9" y1="333.5" x2="1229" y2="333.5" stroke="#32cd32" stroke-dasharray="9 6 3 6"/><rect x="9" y="369" width="1220" height="1" fill="#fff"/><line x1="9" y1="369.5" x2="1229" y2="369.5" stroke="#32cd32" stroke-dasharray="9 6 3 6"/><rect x="9" y="435" width="1220" height="1" fill="#fff"/><line x1="9" y1="435.5" x2="1229" y2="435.5" stroke="#32cd32" stroke-dasharray="9 6 3 6"/><rect x="9" y="521" width="1220" height="1" fill="#fff"/><line x1="9" y1="521.5" x2="1229" y2="521.5" stroke="#32cd32" stroke-dasharray="9 6 3 6"/><rect x="9" y="439" width="1220" height="1" fill="#fff"/><line x1="9" y1="439.5" x2="1229" y2="439.5" stroke="#ff0000" stroke-dasharray="9 6 3 6"/><rect x="9" y="556" width="1220" height="1" fill="#fff"/><line x1="9" y1="556.5" x2="1229" y2="556.5" stroke="#ff0000" stroke-dasharray="9 6 3 6"/><rect x="9" y="336" width="1220" height="1" fill="#8090a0"/><rect x="249" y="138" width="980" height="1" fill="#0000cd"/><rect x="249" y="335" width="980" height="1" fill="#0000cd"/><rect x="249" y="396" width="980" height="1" fill="#0000cd"/><rect x="249" y="457" width="980" height="1" fill="#0000cd"/><rect x="249" y="532" width="980" height="1" fill="#0000cd"/><rect x="249" y="653" width="980" height="1" fill="#0000cd"/><rect x="9" y="251" width="1220" height="2" fill="#0000cd"/><rect x="9" y="374" width="1220" height="2" fill="#0000cd"/><rect x="9" y="302" width="1220" height="2" fill="#ff0000"/><line x1="252" y1="650.5" x2="777" y2="139.7" stroke="#ff0000" stroke-dasharray="3 3"/><polyline fill="none" stroke="#32cd32" stroke-width="2" points="9,407.7 105.5,327.3 329.5,652.6 777.5,139"/><line x1="777.5" y1="139" x2="836" y2="250.8" stroke="#32cd32" stroke-width="2"/><line x1="836" y1="250.8" x2="889.5" y2="353" stroke="#32cd32" stroke-width="1"/><polyline fill="none" stroke="#b0121c" stroke-width="2" points="9,463.3 17.5,460 72.6,438.2 90.1,426.5 120.2,419 150.2,416.5 175.3,414.7 205.3,414 217.8,416.5 250.4,427.7 275.4,440.2 305.5,460 320,469.2 362.6,500 392.6,521.4 407.6,528 432.7,532.6 465.2,538.9 489,538.9 507.8,533.1 530.3,520.1 570.4,497.1 618,463.8 640,436 672.5,397.7 692.6,375.1 730,333.8 757.7,303 780.2,282.5 784,280 815.3,255.2 837.8,246.5 857.8,236.5 880.4,232.2 902.9,229.7 909.2,230.2 935.5,239 953.5,243.2"/><g clip-path="url(#cc)"><rect x="9" y="368" width="1" height="64" fill="#000"/><rect x="4" y="384" width="11" height="44" fill="#000"/><rect x="5" y="385" width="9" height="42" fill="#fff"/><rect x="25" y="339" width="1" height="69" fill="#000"/><rect x="20" y="373" width="11" height="10" fill="#000"/><rect x="21" y="374" width="9" height="8" fill="#fff"/><rect x="41" y="342" width="1" height="53" fill="#000"/><rect x="36" y="372" width="11" height="6" fill="#000"/><rect x="57" y="366" width="1" height="28" fill="#000"/><rect x="52" y="375" width="11" height="14" fill="#000"/><rect x="73" y="378" width="1" height="17" fill="#000"/><rect x="68" y="380" width="11" height="9" fill="#000"/><rect x="69" y="381" width="9" height="7" fill="#fff"/><rect x="89" y="356" width="1" height="28" fill="#000"/><rect x="84" y="358" width="11" height="22" fill="#000"/><rect x="85" y="359" width="9" height="20" fill="#fff"/><rect x="105" y="326" width="1" height="72" fill="#000"/><rect x="100" y="358" width="11" height="30" fill="#000"/><rect x="121" y="380" width="1" height="39" fill="#000"/><rect x="116" y="387" width="11" height="14" fill="#000"/><rect x="137" y="388" width="1" height="88" fill="#000"/><rect x="132" y="400" width="11" height="46" fill="#000"/><rect x="153" y="444" width="1" height="24" fill="#000"/><rect x="148" y="444" width="11" height="2" fill="#000"/><rect x="169" y="435" width="1" height="17" fill="#000"/><rect x="164" y="442" width="11" height="3" fill="#000"/><rect x="165" y="443" width="9" height="1" fill="#fff"/><rect x="185" y="436" width="1" height="37" fill="#000"/><rect x="180" y="442" width="11" height="25" fill="#000"/><rect x="201" y="433" width="1" height="38" fill="#000"/><rect x="196" y="457" width="11" height="10" fill="#000"/><rect x="197" y="458" width="9" height="8" fill="#fff"/><rect x="217" y="358" width="1" height="145" fill="#000"/><rect x="212" y="457" width="11" height="8" fill="#000"/><rect x="233" y="458" width="1" height="139" fill="#000"/><rect x="228" y="463" width="11" height="86" fill="#000"/><rect x="249" y="542" width="1" height="34" fill="#000"/><rect x="244" y="547" width="11" height="2" fill="#000"/><rect x="265" y="540" width="1" height="20" fill="#000"/><rect x="260" y="542" width="11" height="8" fill="#000"/><rect x="261" y="543" width="9" height="6" fill="#fff"/><rect x="281" y="541" width="1" height="33" fill="#000"/><rect x="276" y="542" width="11" height="28" fill="#000"/><rect x="297" y="567" width="1" height="40" fill="#000"/><rect x="292" y="568" width="11" height="16" fill="#000"/><rect x="313" y="523" width="1" height="111" fill="#000"/><rect x="308" y="554" width="11" height="30" fill="#000"/><rect x="309" y="555" width="9" height="28" fill="#fff"/><rect x="329" y="531" width="1" height="122" fill="#000"/><rect x="324" y="554" width="11" height="27" fill="#000"/><rect x="345" y="575" width="1" height="25" fill="#000"/><rect x="340" y="580" width="11" height="6" fill="#000"/><rect x="361" y="583" width="1" height="22" fill="#000"/><rect x="356" y="589" width="11" height="11" fill="#000"/><rect x="357" y="590" width="9" height="9" fill="#fff"/><rect x="377" y="584" width="1" height="15" fill="#000"/><rect x="372" y="589" width="11" height="4" fill="#000"/><rect x="393" y="547" width="1" height="50" fill="#000"/><rect x="388" y="567" width="11" height="26" fill="#000"/><rect x="389" y="568" width="9" height="24" fill="#fff"/><rect x="409" y="510" width="1" height="58" fill="#000"/><rect x="404" y="529" width="11" height="39" fill="#000"/><rect x="405" y="530" width="9" height="37" fill="#fff"/><rect x="425" y="485" width="1" height="60" fill="#000"/><rect x="420" y="506" width="11" height="24" fill="#000"/><rect x="421" y="507" width="9" height="22" fill="#fff"/><rect x="441" y="491" width="1" height="18" fill="#000"/><rect x="436" y="501" width="11" height="7" fill="#000"/><rect x="437" y="502" width="9" height="5" fill="#fff"/><rect x="457" y="487" width="1" height="16" fill="#000"/><rect x="452" y="492" width="11" height="10" fill="#000"/><rect x="453" y="493" width="9" height="8" fill="#fff"/><rect x="473" y="490" width="1" height="13" fill="#000"/><rect x="468" y="492" width="11" height="5" fill="#000"/><rect x="489" y="430" width="1" height="80" fill="#000"/><rect x="484" y="440" width="11" height="57" fill="#000"/><rect x="485" y="441" width="9" height="55" fill="#fff"/><rect x="505" y="377" width="1" height="79" fill="#000"/><rect x="500" y="380" width="11" height="61" fill="#000"/><rect x="501" y="381" width="9" height="59" fill="#fff"/><rect x="521" y="346" width="1" height="53" fill="#000"/><rect x="516" y="380" width="11" height="1" fill="#000"/><rect x="537" y="364" width="1" height="24" fill="#000"/><rect x="532" y="379" width="11" height="3" fill="#000"/><rect x="533" y="380" width="9" height="1" fill="#fff"/><rect x="553" y="377" width="1" height="27" fill="#000"/><rect x="548" y="379" width="11" height="18" fill="#000"/><rect x="569" y="386" width="1" height="15" fill="#000"/><rect x="564" y="390" width="11" height="6" fill="#000"/><rect x="565" y="391" width="9" height="4" fill="#fff"/><rect x="585" y="353" width="1" height="64" fill="#000"/><rect x="580" y="388" width="11" height="3" fill="#000"/><rect x="581" y="389" width="9" height="1" fill="#fff"/><rect x="601" y="356" width="1" height="49" fill="#000"/><rect x="596" y="368" width="11" height="21" fill="#000"/><rect x="597" y="369" width="9" height="19" fill="#fff"/><rect x="617" y="308" width="1" height="71" fill="#000"/><rect x="612" y="353" width="11" height="16" fill="#000"/><rect x="613" y="354" width="9" height="14" fill="#fff"/><rect x="633" y="235" width="1" height="132" fill="#000"/><rect x="628" y="250" width="11" height="102" fill="#000"/><rect x="629" y="251" width="9" height="100" fill="#fff"/><rect x="649" y="217" width="1" height="45" fill="#000"/><rect x="644" y="220" width="11" height="31" fill="#000"/><rect x="645" y="221" width="9" height="29" fill="#fff"/><rect x="665" y="218" width="1" height="53" fill="#000"/><rect x="660" y="220" width="11" height="49" fill="#000"/><rect x="681" y="223" width="1" height="70" fill="#000"/><rect x="676" y="239" width="11" height="30" fill="#000"/><rect x="677" y="240" width="9" height="28" fill="#fff"/><rect x="697" y="207" width="1" height="54" fill="#000"/><rect x="692" y="222" width="11" height="18" fill="#000"/><rect x="693" y="223" width="9" height="16" fill="#fff"/><rect x="713" y="153" width="1" height="100" fill="#000"/><rect x="708" y="181" width="11" height="41" fill="#000"/><rect x="709" y="182" width="9" height="39" fill="#fff"/><rect x="729" y="165" width="1" height="30" fill="#000"/><rect x="724" y="179" width="11" height="5" fill="#000"/><rect x="745" y="163" width="1" height="29" fill="#000"/><rect x="740" y="172" width="11" height="11" fill="#000"/><rect x="741" y="173" width="9" height="9" fill="#fff"/><rect x="761" y="157" width="1" height="17" fill="#000"/><rect x="756" y="167" width="11" height="6" fill="#000"/><rect x="757" y="168" width="9" height="4" fill="#fff"/><rect x="777" y="139" width="1" height="45" fill="#000"/><rect x="772" y="167" width="11" height="17" fill="#000"/><rect x="793" y="155" width="1" height="77" fill="#000"/><rect x="788" y="183" width="11" height="25" fill="#000"/><rect x="809" y="150" width="1" height="68" fill="#000"/><rect x="804" y="157" width="11" height="51" fill="#000"/><rect x="805" y="158" width="9" height="49" fill="#fff"/><rect x="825" y="150" width="1" height="45" fill="#000"/><rect x="820" y="157" width="11" height="29" fill="#000"/><rect x="841" y="235" width="1" height="45" fill="#000"/><rect x="836" y="265" width="11" height="12" fill="#000"/><rect x="837" y="266" width="9" height="10" fill="#fff"/><rect x="857" y="245" width="1" height="30" fill="#000"/><rect x="852" y="248" width="11" height="18" fill="#000"/><rect x="853" y="249" width="9" height="16" fill="#fff"/><rect x="873" y="232" width="1" height="96" fill="#000"/><rect x="868" y="248" width="11" height="80" fill="#000"/><rect x="889" y="297" width="1" height="56" fill="#000"/><rect x="884" y="327" width="11" height="10" fill="#000"/><rect x="905" y="307" width="1" height="44" fill="#000"/><rect x="900" y="310" width="11" height="26" fill="#000"/><rect x="901" y="311" width="9" height="24" fill="#fff"/><rect x="921" y="309" width="1" height="32" fill="#000"/><rect x="916" y="310" width="11" height="18" fill="#000"/><rect x="937" y="325" width="1" height="20" fill="#000"/><rect x="932" y="327" width="11" height="10" fill="#000"/><rect x="953" y="332" width="1" height="11" fill="#000"/><rect x="948" y="335" width="11" height="2" fill="#000"/></g><polygon fill="none" stroke="#ff0000" points="981.5,233.5 988.5,233.5 988.5,244.5 993.5,244.5 985.5,252.5 977.5,244.5 981.5,244.5"/><polygon fill="none" stroke="#ff0000" points="981.5,275.5 988.5,275.5 988.5,286.5 993.5,286.5 985.5,294.5 977.5,286.5 981.5,286.5"/><polygon fill="none" stroke="#ff0000" points="969.5,411.5 977.5,419.5 973.5,419.5 973.5,430.5 965.5,430.5 965.5,419.5 961.5,419.5"/><polygon fill="#708090" points="978,110 989,110 983.5,115"/><rect x="8" y="109" width="1222" height="1" fill="#000"/><rect x="8" y="109" width="1" height="559" fill="#000"/><rect x="1229" y="109" width="1" height="559" fill="#000"/><rect x="8" y="667" width="1222" height="1" fill="#000"/><rect x="1230" y="135" width="2" height="1" fill="#000"/><rect x="1230" y="168" width="2" height="1" fill="#000"/><rect x="1230" y="201" width="2" height="1" fill="#000"/><rect x="1230" y="234" width="2" height="1" fill="#000"/><rect x="1230" y="267" width="2" height="1" fill="#000"/><rect x="1230" y="300" width="2" height="1" fill="#000"/><rect x="1230" y="333" width="2" height="1" fill="#000"/><rect x="1230" y="366" width="2" height="1" fill="#000"/><rect x="1230" y="400" width="2" height="1" fill="#000"/><rect x="1230" y="433" width="2" height="1" fill="#000"/><rect x="1230" y="466" width="2" height="1" fill="#000"/><rect x="1230" y="499" width="2" height="1" fill="#000"/><rect x="1230" y="532" width="2" height="1" fill="#000"/><rect x="1230" y="565" width="2" height="1" fill="#000"/><rect x="1230" y="598" width="2" height="1" fill="#000"/><rect x="1230" y="631" width="2" height="1" fill="#000"/><rect x="1230" y="664" width="2" height="1" fill="#000"/><rect x="9" y="668" width="1" height="3" fill="#000"/><rect x="73" y="668" width="1" height="3" fill="#000"/><rect x="137" y="668" width="1" height="3" fill="#000"/><rect x="201" y="668" width="1" height="3" fill="#000"/><rect x="265" y="668" width="1" height="3" fill="#000"/><rect x="329" y="668" width="1" height="3" fill="#000"/><rect x="393" y="668" width="1" height="3" fill="#000"/><rect x="457" y="668" width="1" height="3" fill="#000"/><rect x="521" y="668" width="1" height="3" fill="#000"/><rect x="585" y="668" width="1" height="3" fill="#000"/><rect x="649" y="668" width="1" height="3" fill="#000"/><rect x="713" y="668" width="1" height="3" fill="#000"/><rect x="777" y="668" width="1" height="3" fill="#000"/><rect x="841" y="668" width="1" height="3" fill="#000"/><rect x="905" y="668" width="1" height="3" fill="#000"/></svg>
<div class="t" style="top:130px;font-size:10px;line-height:10px;color:#000;left:1236px;transform:scale(0.8657,1);transform-origin:left 8px;">1.39070</div>
<div class="t" style="top:163px;font-size:10px;line-height:10px;color:#000;left:1236px;transform:scale(0.8657,1);transform-origin:left 8px;">1.38920</div>
<div class="t" style="top:196px;font-size:10px;line-height:10px;color:#000;left:1236px;transform:scale(0.8657,1);transform-origin:left 8px;">1.38770</div>
<div class="t" style="top:229px;font-size:10px;line-height:10px;color:#000;left:1236px;transform:scale(0.8657,1);transform-origin:left 8px;">1.38620</div>
<div class="t" style="top:262px;font-size:10px;line-height:10px;color:#000;left:1236px;transform:scale(0.8657,1);transform-origin:left 8px;">1.38470</div>
<div class="t" style="top:295px;font-size:10px;line-height:10px;color:#000;left:1236px;transform:scale(0.8657,1);transform-origin:left 8px;">1.38320</div>
<div class="t" style="top:328px;font-size:10px;line-height:10px;color:#000;left:1236px;transform:scale(0.8657,1);transform-origin:left 8px;">1.38170</div>
<div class="t" style="top:361px;font-size:10px;line-height:10px;color:#000;left:1236px;transform:scale(0.8657,1);transform-origin:left 8px;">1.38020</div>
<div class="t" style="top:395px;font-size:10px;line-height:10px;color:#000;left:1236px;transform:scale(0.8657,1);transform-origin:left 8px;">1.37870</div>
<div class="t" style="top:428px;font-size:10px;line-height:10px;color:#000;left:1236px;transform:scale(0.8657,1);transform-origin:left 8px;">1.37720</div>
<div class="t" style="top:461px;font-size:10px;line-height:10px;color:#000;left:1236px;transform:scale(0.8657,1);transform-origin:left 8px;">1.37570</div>
<div class="t" style="top:494px;font-size:10px;line-height:10px;color:#000;left:1236px;transform:scale(0.8657,1);transform-origin:left 8px;">1.37420</div>
<div class="t" style="top:527px;font-size:10px;line-height:10px;color:#000;left:1236px;transform:scale(0.8657,1);transform-origin:left 8px;">1.37270</div>
<div class="t" style="top:560px;font-size:10px;line-height:10px;color:#000;left:1236px;transform:scale(0.8657,1);transform-origin:left 8px;">1.37120</div>
<div class="t" style="top:593px;font-size:10px;line-height:10px;color:#000;left:1236px;transform:scale(0.8657,1);transform-origin:left 8px;">1.36970</div>
<div class="t" style="top:626px;font-size:10px;line-height:10px;color:#000;left:1236px;transform:scale(0.8657,1);transform-origin:left 8px;">1.36820</div>
<div class="t" style="top:659px;font-size:10px;line-height:10px;color:#000;left:1236px;transform:scale(0.8657,1);transform-origin:left 8px;">1.36670</div>
<div class="abs" style="left:1232px;top:297px;width:39px;height:11px;background:#ff0000;"></div>
<div class="t" style="top:298px;font-size:10px;line-height:10px;color:#fff;text-shadow:0 0 0 rgba(255,255,255,.5);left:1236px;transform:scale(0.8657,1);transform-origin:left 8px;">1.38307</div>
<div class="abs" style="left:1232px;top:330px;width:39px;height:11px;background:#000;"></div>
<div class="t" style="top:331px;font-size:10px;line-height:10px;color:#fff;text-shadow:0 0 0 rgba(255,255,255,.5);left:1236px;transform:scale(0.8657,1);transform-origin:left 8px;">1.38157</div>
<div class="abs" style="left:1232px;top:369px;width:39px;height:11px;background:#0000cd;"></div>
<div class="t" style="top:370px;font-size:10px;line-height:10px;color:#fff;text-shadow:0 0 0 rgba(255,255,255,.5);left:1236px;transform:scale(0.8657,1);transform-origin:left 8px;">1.37981</div>
<div class="abs" style="left:1232px;top:246px;width:39px;height:11px;background:#0000cd;"></div>
<div class="t" style="top:247px;font-size:10px;line-height:10px;color:#fff;text-shadow:0 0 0 rgba(255,255,255,.5);left:1236px;transform:scale(0.8657,1);transform-origin:left 8px;">1.38538</div>
<div class="abs" style="left:1204px;top:127px;width:25px;height:10px;background:#fff;"></div>
<div class="t" style="top:128px;font-size:10px;line-height:10px;color:#0000cd;text-shadow:0 0 0 rgba(0,0,205,.5);right:50.700000000000045px;transform:scale(0.8509,1);transform-origin:right 8px;">100.0</div>
<div class="abs" style="left:1208px;top:324px;width:21px;height:10px;background:#fff;"></div>
<div class="t" style="top:325px;font-size:10px;line-height:10px;color:#0000cd;text-shadow:0 0 0 rgba(0,0,205,.5);right:50.700000000000045px;transform:scale(0.9246,1);transform-origin:right 8px;">61.8</div>
<div class="abs" style="left:1208px;top:385px;width:21px;height:10px;background:#fff;"></div>
<div class="t" style="top:386px;font-size:10px;line-height:10px;color:#0000cd;text-shadow:0 0 0 rgba(0,0,205,.5);right:50.700000000000045px;transform:scale(0.9246,1);transform-origin:right 8px;">50.0</div>
<div class="abs" style="left:1208px;top:446px;width:21px;height:10px;background:#fff;"></div>
<div class="t" style="top:447px;font-size:10px;line-height:10px;color:#0000cd;text-shadow:0 0 0 rgba(0,0,205,.5);right:50.700000000000045px;transform:scale(0.9246,1);transform-origin:right 8px;">38.2</div>
<div class="abs" style="left:1208px;top:521px;width:21px;height:10px;background:#fff;"></div>
<div class="t" style="top:522px;font-size:10px;line-height:10px;color:#0000cd;text-shadow:0 0 0 rgba(0,0,205,.5);right:50.700000000000045px;transform:scale(0.9246,1);transform-origin:right 8px;">23.6</div>
<div class="abs" style="left:1213px;top:642px;width:16px;height:10px;background:#fff;"></div>
<div class="t" style="top:643px;font-size:10px;line-height:10px;color:#0000cd;text-shadow:0 0 0 rgba(0,0,205,.5);right:50.700000000000045px;transform:scale(0.8773,1);transform-origin:right 8px;">0.0</div>
<div class="t" style="top:672px;font-size:10px;line-height:10px;color:#000;left:8.5px;transform:scale(0.9302,1);transform-origin:left 8px;">1 Apr 2014</div>
<div class="t" style="top:672px;font-size:10px;line-height:10px;color:#000;left:72.5px;transform:scale(0.9383,1);transform-origin:left 8px;">2 Apr 00:00</div>
<div class="t" style="top:672px;font-size:10px;line-height:10px;color:#000;left:136.5px;transform:scale(0.9383,1);transform-origin:left 8px;">2 Apr 16:00</div>
<div class="t" style="top:672px;font-size:10px;line-height:10px;color:#000;left:200.5px;transform:scale(0.9383,1);transform-origin:left 8px;">3 Apr 08:00</div>
<div class="t" style="top:672px;font-size:10px;line-height:10px;color:#000;left:264.5px;transform:scale(0.9383,1);transform-origin:left 8px;">4 Apr 00:00</div>
<div class="t" style="top:672px;font-size:10px;line-height:10px;color:#000;left:328.5px;transform:scale(0.9383,1);transform-origin:left 8px;">4 Apr 16:00</div>
<div class="t" style="top:672px;font-size:10px;line-height:10px;color:#000;left:392.5px;transform:scale(0.9383,1);transform-origin:left 8px;">7 Apr 08:00</div>
<div class="t" style="top:672px;font-size:10px;line-height:10px;color:#000;left:456.5px;transform:scale(0.9383,1);transform-origin:left 8px;">8 Apr 00:00</div>
<div class="t" style="top:672px;font-size:10px;line-height:10px;color:#000;left:520.5px;transform:scale(0.9383,1);transform-origin:left 8px;">8 Apr 16:00</div>
<div class="t" style="top:672px;font-size:10px;line-height:10px;color:#000;left:584.5px;transform:scale(0.9383,1);transform-origin:left 8px;">9 Apr 08:00</div>
<div class="t" style="top:672px;font-size:10px;line-height:10px;color:#000;left:648.5px;transform:scale(0.9274,1);transform-origin:left 8px;">10 Apr 00:00</div>
<div class="t" style="top:672px;font-size:10px;line-height:10px;color:#000;left:712.5px;transform:scale(0.9274,1);transform-origin:left 8px;">10 Apr 16:00</div>
<div class="t" style="top:672px;font-size:10px;line-height:10px;color:#000;left:776.5px;transform:scale(0.9395,1);transform-origin:left 8px;">11 Apr 08:00</div>
<div class="t" style="top:672px;font-size:10px;line-height:10px;color:#000;left:840.5px;transform:scale(0.9274,1);transform-origin:left 8px;">14 Apr 00:00</div>
<div class="t" style="top:672px;font-size:10px;line-height:10px;color:#000;left:904.5px;transform:scale(0.9274,1);transform-origin:left 8px;">14 Apr 16:00</div>
<svg class="abs" style="left:12px;top:115px;" width="10" height="8" viewBox="0 0 10 8"><path d="M0 1h8l-4 6z" fill="#000"/><path d="M3 5h6M3 7h6M5 3v5M7.500 3v5" stroke="#000" stroke-width=".8"/></svg>
<div class="abs" style="left:15px;top:428px;width:53px;height:10px;background:#fff;"></div>
<div class="t" style="top:429px;font-size:10px;line-height:10px;color:#000;left:15.3px;transform:scale(0.9294,1);transform-origin:left 8px;">#1590775 tp</div>
<div class="abs" style="left:6px;top:687px;width:1266px;height:20px;background:#dedede;"></div>
<div class="abs" style="left:4px;top:687px;width:1270px;height:1px;background:#000;"></div>
<div class="abs" style="left:8px;top:687px;width:81px;height:19px;background:#fff;border:1px solid #000;border-top:none;box-sizing:border-box;"></div>
<div class="t" style="top:692px;font-size:10px;line-height:10px;color:#000;left:18.5px;letter-spacing:-0.144px;">EURUSD,H4</div>
<div class="t" style="top:692px;font-size:10px;line-height:10px;color:#6c6c62;text-shadow:0 0 0 rgba(108,108,98,.5);left:99.5px;transform:scale(0.9603,1);transform-origin:left 8px;">GBPUSD,H4</div>
<div class="t" style="top:692px;font-size:10px;line-height:10px;color:#6c6c62;text-shadow:0 0 0 rgba(108,108,98,.5);left:178px;letter-spacing:0.030px;">EURJPY,H4</div>
<div class="t" style="top:692px;font-size:10px;line-height:10px;color:#6c6c62;text-shadow:0 0 0 rgba(108,108,98,.5);left:255px;letter-spacing:-0.014px;">GBPCHF,H4</div>
<div class="t" style="top:692px;font-size:10px;line-height:10px;color:#6c6c62;text-shadow:0 0 0 rgba(108,108,98,.5);left:335px;letter-spacing:-0.089px;">AUDUSD,H4</div>
<div class="t" style="top:692px;font-size:10px;line-height:10px;color:#6c6c62;text-shadow:0 0 0 rgba(108,108,98,.5);left:414px;letter-spacing:-0.026px;">NZDUSD,H4</div>
<div class="t" style="top:692px;font-size:10px;line-height:10px;color:#6c6c62;text-shadow:0 0 0 rgba(108,108,98,.5);left:493.5px;letter-spacing:-0.016px;">XAUUSD,Daily</div>
<div class="t" style="top:692px;font-size:10px;line-height:10px;color:#6c6c62;text-shadow:0 0 0 rgba(108,108,98,.5);left:581px;letter-spacing:0.078px;">EURCHF,Daily</div>
<div class="t" style="top:692px;font-size:10px;line-height:10px;color:#6c6c62;text-shadow:0 0 0 rgba(108,108,98,.5);left:670px;">EURGBP,Daily</div>
<div class="t" style="top:692px;font-size:10px;line-height:10px;color:#6c6c62;text-shadow:0 0 0 rgba(108,108,98,.5);left:759px;letter-spacing:-0.026px;">AUDNZD,H4</div>
<div class="t" style="top:692px;font-size:10px;line-height:10px;color:#6c6c62;text-shadow:0 0 0 rgba(108,108,98,.5);left:838px;letter-spacing:-0.137px;">GBPJPY,H1</div>
<div class="t" style="top:692px;font-size:10px;line-height:10px;color:#6c6c62;text-shadow:0 0 0 rgba(108,108,98,.5);left:913.5px;letter-spacing:0.078px;">USDCHF,Daily</div>
<div class="t" style="top:692px;font-size:10px;line-height:10px;color:#6c6c62;text-shadow:0 0 0 rgba(108,108,98,.5);left:1002px;letter-spacing:0.030px;">USDJPY,H4</div>
<div class="t" style="top:692px;font-size:10px;line-height:10px;color:#6c6c62;text-shadow:0 0 0 rgba(108,108,98,.5);left:1078.5px;letter-spacing:-0.033px;">USDCAD,H4</div>
<div class="abs" style="left:168px;top:690px;width:1px;height:13px;background:#7b7b72;"></div>
<div class="abs" style="left:244px;top:690px;width:1px;height:13px;background:#7b7b72;"></div>
<div class="abs" style="left:324px;top:690px;width:1px;height:13px;background:#7b7b72;"></div>
<div class="abs" style="left:404px;top:690px;width:1px;height:13px;background:#7b7b72;"></div>
<div class="abs" style="left:484px;top:690px;width:1px;height:13px;background:#7b7b72;"></div>
<div class="abs" style="left:572px;top:690px;width:1px;height:13px;background:#7b7b72;"></div>
<div class="abs" style="left:660px;top:690px;width:1px;height:13px;background:#7b7b72;"></div>
<div class="abs" style="left:748px;top:690px;width:1px;height:13px;background:#7b7b72;"></div>
<div class="abs" style="left:828px;top:690px;width:1px;height:13px;background:#7b7b72;"></div>
<div class="abs" style="left:904px;top:690px;width:1px;height:13px;background:#7b7b72;"></div>
<div class="abs" style="left:992px;top:690px;width:1px;height:13px;background:#7b7b72;"></div>
<div class="abs" style="left:1068px;top:690px;width:1px;height:13px;background:#7b7b72;"></div>
<div class="abs" style="left:1148px;top:690px;width:1px;height:13px;background:#7b7b72;"></div>
<svg class="abs" style="left:1245px;top:694px;" width="4" height="7" viewBox="0 0 4 7"><path d="M4 0v7l-4-3.500z" fill="#9a9a9a"/></svg>
<svg class="abs" style="left:1263px;top:694px;" width="4" height="7" viewBox="0 0 4 7"><path d="M0 0v7l4-3.500z" fill="#9a9a9a"/></svg>
<div class="abs" style="left:4px;top:707px;width:1270px;height:1px;background:#f6f6f6;"></div>
<div class="abs" style="left:4px;top:708px;width:1270px;height:20px;background:#dedede;"></div>
<div class="t" style="top:714px;font-size:11px;line-height:11px;color:#000;left:6px;letter-spacing:-0.051px;">Для справки, нажмите F1</div>
<div class="abs" style="left:553px;top:710px;width:1px;height:17px;background:#fbfbfb;"></div>
<div class="abs" style="left:552px;top:710px;width:1px;height:17px;background:#c0c0c0;"></div>
<div class="abs" style="left:662px;top:710px;width:1px;height:17px;background:#fbfbfb;"></div>
<div class="abs" style="left:661px;top:710px;width:1px;height:17px;background:#c0c0c0;"></div>
<div class="abs" style="left:763px;top:710px;width:1px;height:17px;background:#fbfbfb;"></div>
<div class="abs" style="left:762px;top:710px;width:1px;height:17px;background:#c0c0c0;"></div>
<div class="abs" style="left:835px;top:710px;width:1px;height:17px;background:#fbfbfb;"></div>
<div class="abs" style="left:834px;top:710px;width:1px;height:17px;background:#c0c0c0;"></div>
<div class="abs" style="left:906px;top:710px;width:1px;height:17px;background:#fbfbfb;"></div>
<div class="abs" style="left:905px;top:710px;width:1px;height:17px;background:#c0c0c0;"></div>
<div class="abs" style="left:975px;top:710px;width:1px;height:17px;background:#fbfbfb;"></div>
<div class="abs" style="left:974px;top:710px;width:1px;height:17px;background:#c0c0c0;"></div>
<div class="abs" style="left:1046px;top:710px;width:1px;height:17px;background:#fbfbfb;"></div>
<div class="abs" style="left:1045px;top:710px;width:1px;height:17px;background:#c0c0c0;"></div>
<div class="abs" style="left:1112px;top:710px;width:1px;height:17px;background:#fbfbfb;"></div>
<div class="abs" style="left:1111px;top:710px;width:1px;height:17px;background:#c0c0c0;"></div>
<svg class="abs" style="left:1118px;top:713px;" width="24" height="12" viewBox="0 0 24 12"><rect x="0" y="0" width="2" height="10.0" fill="#4a7a10"/><rect x="0" y="10.0" width="2" height="2.0" fill="#b01818"/><rect x="3" y="0" width="2" height="8.7" fill="#4a7a10"/><rect x="3" y="8.7" width="2" height="3.3" fill="#b01818"/><rect x="6" y="0" width="2" height="7.4" fill="#4a7a10"/><rect x="6" y="7.4" width="2" height="4.6" fill="#b01818"/><rect x="9" y="0" width="2" height="6.1" fill="#4a7a10"/><rect x="9" y="6.1" width="2" height="5.9" fill="#b01818"/><rect x="12" y="0" width="2" height="4.8" fill="#4a7a10"/><rect x="12" y="4.8" width="2" height="7.2" fill="#b01818"/><rect x="15" y="0" width="2" height="3.5" fill="#4a7a10"/><rect x="15" y="3.5" width="2" height="8.5" fill="#b01818"/><rect x="18" y="0" width="2" height="2.1999999999999993" fill="#4a7a10"/><rect x="18" y="2.1999999999999993" width="2" height="9.8" fill="#b01818"/><rect x="21" y="0" width="2" height="0.9000000000000004" fill="#4a7a10"/><rect x="21" y="0.9000000000000004" width="2" height="11.1" fill="#b01818"/></svg>
<div class="t" style="top:714px;font-size:11px;line-height:11px;color:#000;left:1169.5px;transform:scale(0.9478,1);transform-origin:left top;">120/0 kb</div>
<svg class="abs" style="left:1258px;top:713px;" width="14" height="14" viewBox="0 0 14 14"><path d="M13 1L1 13M13 5L5 13M13 9L9 13" stroke="#b0b0b0" stroke-width="1.200"/><path d="M14 2L2 14M14 6L6 14M14 10L10 14" stroke="#fff" stroke-width="1"/></svg>
</div></body></html>
